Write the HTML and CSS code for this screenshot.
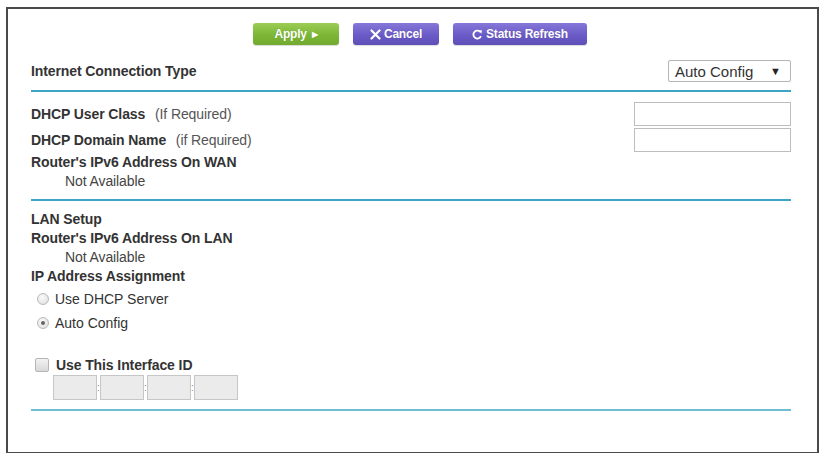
FILE: index.html
```html
<!DOCTYPE html>
<html>
<head>
<meta charset="utf-8">
<link rel="stylesheet" href="styles.css">
</head>
<body>
<div class="frame">
  <div class="btnrow">
    <button class="btn green">Apply <span class="tri">&#9654;</span></button>
    <button class="btn purple"><svg class="ico" width="11" height="11" viewBox="0 0 11 11"><path d="M1.5 1.5 L9.5 9.5 M9.5 1.5 L1.5 9.5" stroke="#fff" stroke-width="2.2" stroke-linecap="round"/></svg>Cancel</button>
    <button class="btn purple wide"><svg class="ico" width="11" height="11" viewBox="0 0 11 11"><path d="M8.6 3.2 A4 4 0 1 0 9 7.2" fill="none" stroke="#fff" stroke-width="1.8"/><path d="M6.6 1.6 L10 1.2 L9.4 4.8 Z" fill="#fff"/></svg>Status Refresh</button>
  </div>

  <div class="row ict">
    <span class="lbl">Internet Connection Type</span>
    <div class="select">Auto Config <span class="arr">&#9660;</span></div>
  </div>
  <div class="rule r1"></div>

  <div class="row field first">
    <span class="lbl">DHCP User Class <span class="note">(If Required)</span></span>
    <div class="tbox"></div>
  </div>
  <div class="row field">
    <span class="lbl">DHCP Domain Name <span class="note">(if Required)</span></span>
    <div class="tbox"></div>
  </div>
  <div class="line lbl wan">Router's IPv6 Address On WAN</div>
  <div class="line val">Not Available</div>
  <div class="rule r2"></div>

  <div class="line lbl lan">LAN Setup</div>
  <div class="line lbl">Router's IPv6 Address On LAN</div>
  <div class="line val">Not Available</div>
  <div class="line lbl">IP Address Assignment</div>
  <div class="opt first"><span class="radio"></span>Use DHCP Server</div>
  <div class="opt"><span class="radio on"></span>Auto Config</div>
  <div class="opt chk"><span class="cbox"></span><span class="lbl">Use This Interface ID</span></div>
  <div class="ifid">
    <div class="seg"></div><span class="colon">:</span><div class="seg"></div><span class="colon">:</span><div class="seg"></div><span class="colon">:</span><div class="seg"></div>
  </div>
  <div class="rule r3"></div>
</div>
</body>
</html>
```

FILE: styles.css
```css
html, body {
  margin: 0;
  padding: 0;
  background: #fff;
}
body {
  font-family: "Liberation Sans", Arial, sans-serif;
  color: #333;
}
.frame {
  margin: 7px 2px 0 6px;
  height: 443px;
  border: 2px solid #4a4a4a;
  border-bottom-width: 1px;
  padding: 0 26px 0 23px;
  box-sizing: content-box;
}
.btnrow {
  display: flex;
  gap: 14px;
  padding-top: 14px;
  padding-left: 222px;
}
.btn {
  height: 22px;
  border: none;
  border-radius: 3px;
  color: #fff;
  font-family: "Liberation Sans", Arial, sans-serif;
  font-weight: bold;
  font-size: 12px;
  letter-spacing: -0.2px;
  display: flex;
  align-items: center;
  justify-content: center;
  padding: 0;
  text-shadow: 0 0 1px rgba(0,0,0,0.2);
  box-shadow: 0 1px 1px rgba(0,0,0,0.15);
}
.green {
  width: 86px;
  background: linear-gradient(#9ccd55, #7cb636 55%, #72a92f);
}
.purple {
  width: 86px;
  background: linear-gradient(#8677d9, #6a5ac6 55%, #5e4fb8);
}
.purple.wide {
  width: 134px;
}
.tri {
  font-size: 8px;
  margin-left: 5px;
}
.ico {
  margin-right: 3px;
}
.row {
  display: flex;
  justify-content: space-between;
  align-items: center;
}
.lbl {
  font-weight: bold;
  font-size: 14px;
  color: #333;
  letter-spacing: -0.1px;
}
.note {
  font-weight: normal;
  color: #555;
  margin-left: 6px;
}
.ict {
  margin-top: 15px;
  height: 22px;
}
.select {
  width: 121px;
  height: 20px;
  border: 1px solid #b5b5b5;
  border-radius: 2px;
  box-sizing: content-box;
  font-size: 15px;
  color: #333;
  display: flex;
  align-items: center;
  justify-content: space-between;
  text-indent: 6px;
  box-shadow: inset 0 0 1px rgba(0,0,0,0.1);
}
.select .arr {
  font-size: 11px;
  margin-right: 9px;
  color: #222;
  text-indent: 0;
}
.rule {
  background: #3ca5c3;
  height: 2px;
}
.r1 { margin-top: 8px; }
.r2 { margin-top: 8px; }
.r3 { margin-top: 9px; height: 2px; background: #6fbfd2; }
.field {
  height: 24px;
}
.field.first { margin-top: 10px; }
.field + .field { margin-top: 2px; }
.tbox {
  width: 155px;
  height: 22px;
  border: 1px solid #bdbdbd;
  background: #fff;
}
.line {
  height: 19px;
  line-height: 19px;
}
.wan { margin-top: 1px; }
.val {
  font-size: 14px;
  color: #444;
  padding-left: 34px;
  letter-spacing: -0.1px;
}
.lan { margin-top: 9px; }
.opt {
  display: flex;
  align-items: center;
  font-size: 14px;
  color: #333;
  height: 24px;
}
.opt.first { margin-top: 1px; }
.radio {
  width: 10px;
  height: 10px;
  border-radius: 50%;
  border: 1px solid #b9b9b9;
  background: radial-gradient(circle at 40% 35%, #fafafa, #dcdcdc);
  margin-left: 6px;
  margin-right: 6px;
  position: relative;
}
.radio.on::after {
  content: "";
  position: absolute;
  left: 3px;
  top: 3px;
  width: 4px;
  height: 4px;
  border-radius: 50%;
  background: #666;
}
.opt.chk {
  margin-top: 21px;
  height: 18px;
}
.cbox {
  width: 12px;
  height: 12px;
  border: 1px solid #b5b5b5;
  border-radius: 2px;
  background: linear-gradient(#f2f2f2, #d8d8d8);
  margin-left: 4px;
  margin-right: 7px;
}
.opt.chk .lbl { font-size: 14px; }
.ifid {
  display: flex;
  align-items: center;
  margin-top: 1px;
  padding-left: 22px;
  height: 25px;
}
.seg {
  width: 42px;
  height: 23px;
  background: #ebebeb;
  border: 1px solid #c6c6c6;
}
.colon {
  width: 3px;
  text-align: center;
  font-size: 10px;
  color: #888;
  line-height: 10px;
}
```
